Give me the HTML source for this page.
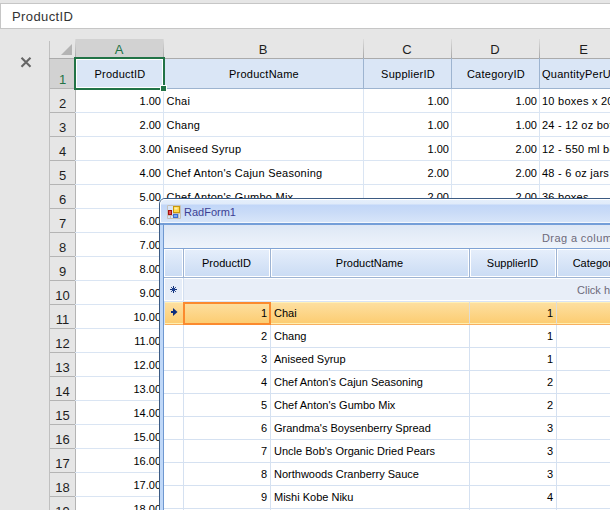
<!DOCTYPE html><html><head><meta charset="utf-8"><style>
*{margin:0;padding:0;box-sizing:border-box}
html,body{width:610px;height:510px;overflow:hidden;background:#e6e6e6;font-family:"Liberation Sans",sans-serif;position:relative}
.a{position:absolute}
.t{position:absolute;white-space:nowrap;font-size:11px;line-height:13px;color:#000}
</style></head><body>

<div class="a" style="left:0;top:3px;width:610px;height:26px;background:#fff;border:1px solid #c6c6c6;border-right:none"></div>
<div class="t" style="left:12px;top:9px;font-size:13px;line-height:16px;color:#333;letter-spacing:0.4px">ProductID</div>
<svg class="a" style="left:20px;top:56px" width="12" height="12" viewBox="0 0 12 12"><path d="M1.5 1.8L10.5 10.8M10.5 1.8L1.5 10.8" stroke="#666" stroke-width="2.1"/></svg>
<div class="a" style="left:49px;top:41px;width:1px;height:470px;background:#c0c0c0"></div>
<svg class="a" style="left:60px;top:44px" width="13" height="12"><path d="M12 0L12 11L1 11Z" fill="#b4b4b4"/></svg>
<div class="a" style="left:75px;top:39px;width:88px;height:19px;background:#d2d2d2"></div>
<div class="t" style="left:75px;width:88px;text-align:center;top:42px;font-size:13px;line-height:16px;color:#217346">A</div>
<div class="a" style="left:163px;top:39px;width:200px;height:19px;background:#e6e6e6"></div>
<div class="t" style="left:163px;width:200px;text-align:center;top:42px;font-size:13px;line-height:16px;color:#1e1e1e">B</div>
<div class="a" style="left:363px;top:39px;width:88px;height:19px;background:#e6e6e6"></div>
<div class="t" style="left:363px;width:88px;text-align:center;top:42px;font-size:13px;line-height:16px;color:#1e1e1e">C</div>
<div class="a" style="left:451px;top:39px;width:88px;height:19px;background:#e6e6e6"></div>
<div class="t" style="left:451px;width:88px;text-align:center;top:42px;font-size:13px;line-height:16px;color:#1e1e1e">D</div>
<div class="a" style="left:539px;top:39px;width:89px;height:19px;background:#e6e6e6"></div>
<div class="t" style="left:539px;width:89px;text-align:center;top:42px;font-size:13px;line-height:16px;color:#1e1e1e">E</div>
<div class="a" style="left:49px;top:58px;width:561px;height:1px;background:#ababab"></div>
<div class="a" style="left:163px;top:39px;width:1px;height:19px;background:linear-gradient(#dcdcdc,#a8a8a8)"></div>
<div class="a" style="left:363px;top:39px;width:1px;height:19px;background:linear-gradient(#dcdcdc,#a8a8a8)"></div>
<div class="a" style="left:451px;top:39px;width:1px;height:19px;background:linear-gradient(#dcdcdc,#a8a8a8)"></div>
<div class="a" style="left:539px;top:39px;width:1px;height:19px;background:linear-gradient(#dcdcdc,#a8a8a8)"></div>
<div class="a" style="left:628px;top:39px;width:1px;height:19px;background:linear-gradient(#dcdcdc,#a8a8a8)"></div>
<div class="a" style="left:75px;top:39px;width:1px;height:19px;background:linear-gradient(#dcdcdc,#a8a8a8)"></div>
<div class="a" style="left:50px;top:59px;width:25px;height:29px;background:#d2d2d2"></div>
<div class="t" style="left:50px;width:25px;text-align:center;top:72px;font-size:13px;line-height:16px;color:#217346">1</div>
<div class="a" style="left:50px;top:88px;width:25px;height:24px;background:#e6e6e6"></div>
<div class="t" style="left:50px;width:25px;text-align:center;top:96px;font-size:13px;line-height:16px;color:#1e1e1e">2</div>
<div class="a" style="left:50px;top:112px;width:25px;height:24px;background:#e6e6e6"></div>
<div class="t" style="left:50px;width:25px;text-align:center;top:120px;font-size:13px;line-height:16px;color:#1e1e1e">3</div>
<div class="a" style="left:50px;top:136px;width:25px;height:24px;background:#e6e6e6"></div>
<div class="t" style="left:50px;width:25px;text-align:center;top:144px;font-size:13px;line-height:16px;color:#1e1e1e">4</div>
<div class="a" style="left:50px;top:160px;width:25px;height:24px;background:#e6e6e6"></div>
<div class="t" style="left:50px;width:25px;text-align:center;top:168px;font-size:13px;line-height:16px;color:#1e1e1e">5</div>
<div class="a" style="left:50px;top:184px;width:25px;height:24px;background:#e6e6e6"></div>
<div class="t" style="left:50px;width:25px;text-align:center;top:192px;font-size:13px;line-height:16px;color:#1e1e1e">6</div>
<div class="a" style="left:50px;top:208px;width:25px;height:24px;background:#e6e6e6"></div>
<div class="t" style="left:50px;width:25px;text-align:center;top:216px;font-size:13px;line-height:16px;color:#1e1e1e">7</div>
<div class="a" style="left:50px;top:232px;width:25px;height:24px;background:#e6e6e6"></div>
<div class="t" style="left:50px;width:25px;text-align:center;top:240px;font-size:13px;line-height:16px;color:#1e1e1e">8</div>
<div class="a" style="left:50px;top:256px;width:25px;height:24px;background:#e6e6e6"></div>
<div class="t" style="left:50px;width:25px;text-align:center;top:264px;font-size:13px;line-height:16px;color:#1e1e1e">9</div>
<div class="a" style="left:50px;top:280px;width:25px;height:24px;background:#e6e6e6"></div>
<div class="t" style="left:50px;width:25px;text-align:center;top:288px;font-size:13px;line-height:16px;color:#1e1e1e">10</div>
<div class="a" style="left:50px;top:304px;width:25px;height:24px;background:#e6e6e6"></div>
<div class="t" style="left:50px;width:25px;text-align:center;top:312px;font-size:13px;line-height:16px;color:#1e1e1e">11</div>
<div class="a" style="left:50px;top:328px;width:25px;height:24px;background:#e6e6e6"></div>
<div class="t" style="left:50px;width:25px;text-align:center;top:336px;font-size:13px;line-height:16px;color:#1e1e1e">12</div>
<div class="a" style="left:50px;top:352px;width:25px;height:24px;background:#e6e6e6"></div>
<div class="t" style="left:50px;width:25px;text-align:center;top:360px;font-size:13px;line-height:16px;color:#1e1e1e">13</div>
<div class="a" style="left:50px;top:376px;width:25px;height:24px;background:#e6e6e6"></div>
<div class="t" style="left:50px;width:25px;text-align:center;top:384px;font-size:13px;line-height:16px;color:#1e1e1e">14</div>
<div class="a" style="left:50px;top:400px;width:25px;height:24px;background:#e6e6e6"></div>
<div class="t" style="left:50px;width:25px;text-align:center;top:408px;font-size:13px;line-height:16px;color:#1e1e1e">15</div>
<div class="a" style="left:50px;top:424px;width:25px;height:24px;background:#e6e6e6"></div>
<div class="t" style="left:50px;width:25px;text-align:center;top:432px;font-size:13px;line-height:16px;color:#1e1e1e">16</div>
<div class="a" style="left:50px;top:448px;width:25px;height:24px;background:#e6e6e6"></div>
<div class="t" style="left:50px;width:25px;text-align:center;top:456px;font-size:13px;line-height:16px;color:#1e1e1e">17</div>
<div class="a" style="left:50px;top:472px;width:25px;height:24px;background:#e6e6e6"></div>
<div class="t" style="left:50px;width:25px;text-align:center;top:480px;font-size:13px;line-height:16px;color:#1e1e1e">18</div>
<div class="a" style="left:50px;top:496px;width:25px;height:24px;background:#e6e6e6"></div>
<div class="t" style="left:50px;width:25px;text-align:center;top:504px;font-size:13px;line-height:16px;color:#1e1e1e">19</div>
<div class="a" style="left:50px;top:520px;width:25px;height:24px;background:#e6e6e6"></div>
<div class="t" style="left:50px;width:25px;text-align:center;top:528px;font-size:13px;line-height:16px;color:#1e1e1e">20</div>
<div class="a" style="left:50px;top:88px;width:25px;height:1px;background:#b4b4b4"></div>
<div class="a" style="left:50px;top:112px;width:25px;height:1px;background:#b4b4b4"></div>
<div class="a" style="left:50px;top:136px;width:25px;height:1px;background:#b4b4b4"></div>
<div class="a" style="left:50px;top:160px;width:25px;height:1px;background:#b4b4b4"></div>
<div class="a" style="left:50px;top:184px;width:25px;height:1px;background:#b4b4b4"></div>
<div class="a" style="left:50px;top:208px;width:25px;height:1px;background:#b4b4b4"></div>
<div class="a" style="left:50px;top:232px;width:25px;height:1px;background:#b4b4b4"></div>
<div class="a" style="left:50px;top:256px;width:25px;height:1px;background:#b4b4b4"></div>
<div class="a" style="left:50px;top:280px;width:25px;height:1px;background:#b4b4b4"></div>
<div class="a" style="left:50px;top:304px;width:25px;height:1px;background:#b4b4b4"></div>
<div class="a" style="left:50px;top:328px;width:25px;height:1px;background:#b4b4b4"></div>
<div class="a" style="left:50px;top:352px;width:25px;height:1px;background:#b4b4b4"></div>
<div class="a" style="left:50px;top:376px;width:25px;height:1px;background:#b4b4b4"></div>
<div class="a" style="left:50px;top:400px;width:25px;height:1px;background:#b4b4b4"></div>
<div class="a" style="left:50px;top:424px;width:25px;height:1px;background:#b4b4b4"></div>
<div class="a" style="left:50px;top:448px;width:25px;height:1px;background:#b4b4b4"></div>
<div class="a" style="left:50px;top:472px;width:25px;height:1px;background:#b4b4b4"></div>
<div class="a" style="left:50px;top:496px;width:25px;height:1px;background:#b4b4b4"></div>
<div class="a" style="left:50px;top:520px;width:25px;height:1px;background:#b4b4b4"></div>
<div class="a" style="left:50px;top:544px;width:25px;height:1px;background:#b4b4b4"></div>
<div class="a" style="left:75px;top:58px;width:1px;height:460px;background:#b4b4b4"></div>
<div class="a" style="left:76px;top:59px;width:535px;height:460px;background:#fff"></div>
<div class="a" style="left:76px;top:59px;width:535px;height:29px;background:#dae6f6"></div>
<div class="a" style="left:163px;top:58px;width:1px;height:30px;background:#9db4d0"></div>
<div class="a" style="left:163px;top:88px;width:1px;height:430px;background:#dae5f3"></div>
<div class="a" style="left:363px;top:58px;width:1px;height:30px;background:#9db4d0"></div>
<div class="a" style="left:363px;top:88px;width:1px;height:430px;background:#dae5f3"></div>
<div class="a" style="left:451px;top:58px;width:1px;height:30px;background:#9db4d0"></div>
<div class="a" style="left:451px;top:88px;width:1px;height:430px;background:#dae5f3"></div>
<div class="a" style="left:539px;top:58px;width:1px;height:30px;background:#9db4d0"></div>
<div class="a" style="left:539px;top:88px;width:1px;height:430px;background:#dae5f3"></div>
<div class="a" style="left:628px;top:58px;width:1px;height:30px;background:#9db4d0"></div>
<div class="a" style="left:628px;top:88px;width:1px;height:430px;background:#dae5f3"></div>
<div class="a" style="left:75px;top:88px;width:535px;height:1px;background:#9db4d0"></div>
<div class="a" style="left:75px;top:112px;width:535px;height:1px;background:#dae5f3"></div>
<div class="a" style="left:75px;top:136px;width:535px;height:1px;background:#dae5f3"></div>
<div class="a" style="left:75px;top:160px;width:535px;height:1px;background:#dae5f3"></div>
<div class="a" style="left:75px;top:184px;width:535px;height:1px;background:#dae5f3"></div>
<div class="a" style="left:75px;top:208px;width:535px;height:1px;background:#dae5f3"></div>
<div class="a" style="left:75px;top:232px;width:535px;height:1px;background:#dae5f3"></div>
<div class="a" style="left:75px;top:256px;width:535px;height:1px;background:#dae5f3"></div>
<div class="a" style="left:75px;top:280px;width:535px;height:1px;background:#dae5f3"></div>
<div class="a" style="left:75px;top:304px;width:535px;height:1px;background:#dae5f3"></div>
<div class="a" style="left:75px;top:328px;width:535px;height:1px;background:#dae5f3"></div>
<div class="a" style="left:75px;top:352px;width:535px;height:1px;background:#dae5f3"></div>
<div class="a" style="left:75px;top:376px;width:535px;height:1px;background:#dae5f3"></div>
<div class="a" style="left:75px;top:400px;width:535px;height:1px;background:#dae5f3"></div>
<div class="a" style="left:75px;top:424px;width:535px;height:1px;background:#dae5f3"></div>
<div class="a" style="left:75px;top:448px;width:535px;height:1px;background:#dae5f3"></div>
<div class="a" style="left:75px;top:472px;width:535px;height:1px;background:#dae5f3"></div>
<div class="a" style="left:75px;top:496px;width:535px;height:1px;background:#dae5f3"></div>
<div class="a" style="left:75px;top:520px;width:535px;height:1px;background:#dae5f3"></div>
<div class="t" style="left:76px;width:88px;text-align:center;top:68px;letter-spacing:0.25px">ProductID</div>
<div class="t" style="left:164px;width:200px;text-align:center;top:68px;letter-spacing:0.25px">ProductName</div>
<div class="t" style="left:364px;width:88px;text-align:center;top:68px;letter-spacing:0.25px">SupplierID</div>
<div class="t" style="left:452px;width:88px;text-align:center;top:68px;letter-spacing:0.25px">CategoryID</div>
<div class="t" style="left:542px;top:68px;letter-spacing:0.25px">QuantityPerUnit</div>
<div class="t" style="left:75px;width:86px;text-align:right;top:95px">1.00</div>
<div class="t" style="left:166.5px;top:95px;letter-spacing:0.25px">Chai</div>
<div class="t" style="left:363px;width:86px;text-align:right;top:95px">1.00</div>
<div class="t" style="left:451px;width:86px;text-align:right;top:95px">1.00</div>
<div class="t" style="left:542px;top:95px;letter-spacing:0.25px">10 boxes x 20 bags</div>
<div class="t" style="left:75px;width:86px;text-align:right;top:119px">2.00</div>
<div class="t" style="left:166.5px;top:119px;letter-spacing:0.25px">Chang</div>
<div class="t" style="left:363px;width:86px;text-align:right;top:119px">1.00</div>
<div class="t" style="left:451px;width:86px;text-align:right;top:119px">1.00</div>
<div class="t" style="left:542px;top:119px;letter-spacing:0.25px">24 - 12 oz bottles</div>
<div class="t" style="left:75px;width:86px;text-align:right;top:143px">3.00</div>
<div class="t" style="left:166.5px;top:143px;letter-spacing:0.25px">Aniseed Syrup</div>
<div class="t" style="left:363px;width:86px;text-align:right;top:143px">1.00</div>
<div class="t" style="left:451px;width:86px;text-align:right;top:143px">2.00</div>
<div class="t" style="left:542px;top:143px;letter-spacing:0.25px">12 - 550 ml bottles</div>
<div class="t" style="left:75px;width:86px;text-align:right;top:167px">4.00</div>
<div class="t" style="left:166.5px;top:167px;letter-spacing:0.25px">Chef Anton's Cajun Seasoning</div>
<div class="t" style="left:363px;width:86px;text-align:right;top:167px">2.00</div>
<div class="t" style="left:451px;width:86px;text-align:right;top:167px">2.00</div>
<div class="t" style="left:542px;top:167px;letter-spacing:0.25px">48 - 6 oz jars</div>
<div class="t" style="left:75px;width:86px;text-align:right;top:191px">5.00</div>
<div class="t" style="left:166.5px;top:191px;letter-spacing:0.25px">Chef Anton's Gumbo Mix</div>
<div class="t" style="left:363px;width:86px;text-align:right;top:191px">2.00</div>
<div class="t" style="left:451px;width:86px;text-align:right;top:191px">2.00</div>
<div class="t" style="left:542px;top:191px;letter-spacing:0.25px">36 boxes</div>
<div class="t" style="left:75px;width:86px;text-align:right;top:215px">6.00</div>
<div class="t" style="left:75px;width:86px;text-align:right;top:239px">7.00</div>
<div class="t" style="left:75px;width:86px;text-align:right;top:263px">8.00</div>
<div class="t" style="left:75px;width:86px;text-align:right;top:287px">9.00</div>
<div class="t" style="left:75px;width:86px;text-align:right;top:311px">10.00</div>
<div class="t" style="left:75px;width:86px;text-align:right;top:335px">11.00</div>
<div class="t" style="left:75px;width:86px;text-align:right;top:359px">12.00</div>
<div class="t" style="left:75px;width:86px;text-align:right;top:383px">13.00</div>
<div class="t" style="left:75px;width:86px;text-align:right;top:407px">14.00</div>
<div class="t" style="left:75px;width:86px;text-align:right;top:431px">15.00</div>
<div class="t" style="left:75px;width:86px;text-align:right;top:455px">16.00</div>
<div class="t" style="left:75px;width:86px;text-align:right;top:479px">17.00</div>
<div class="t" style="left:75px;width:86px;text-align:right;top:503px">18.00</div>
<div class="a" style="left:74px;top:57px;width:91px;height:33px;border:2px solid #217346"></div>
<div class="a" style="left:76px;top:59px;width:87px;height:29px;border:1px solid #fff"></div>
<div class="a" style="left:160px;top:85px;width:7px;height:7px;background:#217346;border:1px solid #fff"></div>
<div class="a" style="left:159px;top:198px;width:520px;height:400px;background:#fff;border:1px solid #3b5a82;border-radius:6px 6px 0 0;overflow:hidden"><div class="a" style="left:0;top:0;width:520px;height:400px;border-left:1px solid #fff;border-top:1px solid #fff;border-radius:5px 5px 0 0"></div></div>
<div class="a" style="left:161px;top:200px;width:460px;height:22px;border-radius:4px 0 0 0;background:linear-gradient(#e4eefb 0px,#e0ebfa 4px,#c1d6f8 5px,#c9dbf7 12px,#d7e5f9 22px)"></div>
<div class="a" style="left:160px;top:222px;width:460px;height:1px;background:#f4f8fd"></div>
<div class="a" style="left:160px;top:223px;width:460px;height:2px;background:#749ed8"></div>
<div class="a" style="left:160px;top:225px;width:3px;height:300px;background:#c0d8f8"></div>
<div class="a" style="left:163px;top:223px;width:1px;height:300px;background:#6f98d0"></div>
<svg class="a" style="left:167px;top:205px" width="14" height="14" viewBox="0 0 14 14"><rect x="0" y="0" width="14" height="14" fill="#d6e4f8"/><path d="M0.5 0.5H13.5V13.5H0.5Z M3.5 9V13.5 M0.5 10.5H6 M11.5 8V13.5 M6 8.5H13.5" fill="none" stroke="#c4c0b8" stroke-width="1"/><rect x="6" y="1" width="7" height="7" fill="#c8980c"/><rect x="7" y="2" width="5" height="5" fill="#ffd84a"/><rect x="7.5" y="2.5" width="3" height="2" fill="#fff0a8"/><rect x="1" y="5" width="4" height="5" fill="#a81010"/><rect x="2" y="6" width="2" height="3" fill="#e05050"/><rect x="6" y="9" width="5" height="4" fill="#3a6cd0"/><rect x="7" y="10" width="3" height="2" fill="#78a8f0"/></svg>
<div class="t" style="left:184px;top:205px;font-size:11px;line-height:14px;color:#3c3f94">RadForm1</div>
<div class="a" style="left:164px;top:225px;width:460px;height:23px;background:linear-gradient(#dde7f5,#eff4fb)"></div>
<div class="t" style="left:542px;top:232px;color:#6d6a7a;letter-spacing:0.4px">Drag a column here to group by this column.</div>
<div class="a" style="left:164px;top:248px;width:460px;height:30px;background:#9db3d3"></div>
<div class="a" style="left:164px;top:248px;width:460px;height:1px;background:#80a3d4"></div>
<div class="a" style="left:164px;top:249px;width:19px;height:28px;background:linear-gradient(#e5eefb,#cbdcf4);border:1px solid #fff"></div>
<div class="a" style="left:184px;top:249px;width:86px;height:28px;background:linear-gradient(#e5eefb,#cbdcf4);border:1px solid #fff"></div>
<div class="a" style="left:271px;top:249px;width:198px;height:28px;background:linear-gradient(#e5eefb,#cbdcf4);border:1px solid #fff"></div>
<div class="a" style="left:470px;top:249px;width:86px;height:28px;background:linear-gradient(#e5eefb,#cbdcf4);border:1px solid #fff"></div>
<div class="a" style="left:557px;top:249px;width:88px;height:28px;background:linear-gradient(#e5eefb,#cbdcf4);border:1px solid #fff"></div>
<div class="a" style="left:646px;top:249px;width:54px;height:28px;background:linear-gradient(#e5eefb,#cbdcf4);border:1px solid #fff"></div>
<div class="t" style="left:183px;width:87px;text-align:center;top:257px;color:#000">ProductID</div>
<div class="t" style="left:270px;width:199px;text-align:center;top:257px;color:#000">ProductName</div>
<div class="t" style="left:469px;width:87px;text-align:center;top:257px;color:#000">SupplierID</div>
<div class="t" style="left:556px;width:89px;text-align:center;top:257px;color:#000">CategoryID</div>
<div class="a" style="left:164px;top:278px;width:460px;height:24px;background:#f3f6fb"></div>
<div class="a" style="left:164px;top:278px;width:19px;height:23px;background:#e6edf8;border:1px solid #fff"></div>
<div class="a" style="left:183px;top:278px;width:1px;height:24px;background:#d3dff0"></div>
<div class="a" style="left:184px;top:278px;width:440px;height:23px;background:#e8eef8;border-top:1px solid #fff;border-bottom:1px solid #fff"></div>
<svg class="a" style="left:170px;top:286px" width="8" height="8" viewBox="0 0 8 8"><path d="M3.5 0V7M0 3.5H7M1.2 1.2L5.8 5.8M5.8 1.2L1.2 5.8" stroke="#14327a" stroke-width="1"/><circle cx="3.5" cy="3.5" r="1.6" fill="#1e4494"/></svg>
<div class="t" style="left:577px;top:284px;color:#6d6a7a">Click here to add a new row</div>
<div class="a" style="left:164px;top:302px;width:460px;height:23px;background:linear-gradient(#fde0a2,#fccb6e)"></div>
<div class="a" style="left:164px;top:302px;width:460px;height:1px;background:#fff0b8"></div>
<div class="a" style="left:164px;top:301px;width:460px;height:1px;background:#d8e3f4"></div>
<div class="a" style="left:164px;top:323px;width:460px;height:1px;background:#ffeeb0"></div>
<div class="a" style="left:164px;top:324px;width:460px;height:1px;background:#f8b060"></div>
<div class="a" style="left:164px;top:302px;width:1px;height:23px;background:#d0e0f8"></div>
<div class="a" style="left:469px;top:302px;width:1px;height:22px;background:#dcdcd8"></div>
<div class="a" style="left:556px;top:302px;width:1px;height:22px;background:#dcdcd8"></div>
<div class="a" style="left:183px;top:302px;width:88px;height:23px;border:2px solid #fb8a2e"></div>
<div class="t" style="left:184px;width:83px;text-align:right;top:307px">1</div>
<div class="t" style="left:274px;top:307px">Chai</div>
<div class="t" style="left:470px;width:83px;text-align:right;top:307px">1</div>
<div class="a" style="left:164px;top:347px;width:460px;height:1px;background:#d5e1f1"></div>
<div class="t" style="left:184px;width:83px;text-align:right;top:330px">2</div>
<div class="t" style="left:274px;top:330px">Chang</div>
<div class="t" style="left:470px;width:83px;text-align:right;top:330px">1</div>
<div class="a" style="left:164px;top:370px;width:460px;height:1px;background:#d5e1f1"></div>
<div class="t" style="left:184px;width:83px;text-align:right;top:353px">3</div>
<div class="t" style="left:274px;top:353px">Aniseed Syrup</div>
<div class="t" style="left:470px;width:83px;text-align:right;top:353px">1</div>
<div class="a" style="left:164px;top:393px;width:460px;height:1px;background:#d5e1f1"></div>
<div class="t" style="left:184px;width:83px;text-align:right;top:376px">4</div>
<div class="t" style="left:274px;top:376px">Chef Anton's Cajun Seasoning</div>
<div class="t" style="left:470px;width:83px;text-align:right;top:376px">2</div>
<div class="a" style="left:164px;top:416px;width:460px;height:1px;background:#d5e1f1"></div>
<div class="t" style="left:184px;width:83px;text-align:right;top:399px">5</div>
<div class="t" style="left:274px;top:399px">Chef Anton's Gumbo Mix</div>
<div class="t" style="left:470px;width:83px;text-align:right;top:399px">2</div>
<div class="a" style="left:164px;top:439px;width:460px;height:1px;background:#d5e1f1"></div>
<div class="t" style="left:184px;width:83px;text-align:right;top:422px">6</div>
<div class="t" style="left:274px;top:422px">Grandma's Boysenberry Spread</div>
<div class="t" style="left:470px;width:83px;text-align:right;top:422px">3</div>
<div class="a" style="left:164px;top:462px;width:460px;height:1px;background:#d5e1f1"></div>
<div class="t" style="left:184px;width:83px;text-align:right;top:445px">7</div>
<div class="t" style="left:274px;top:445px">Uncle Bob's Organic Dried Pears</div>
<div class="t" style="left:470px;width:83px;text-align:right;top:445px">3</div>
<div class="a" style="left:164px;top:485px;width:460px;height:1px;background:#d5e1f1"></div>
<div class="t" style="left:184px;width:83px;text-align:right;top:468px">8</div>
<div class="t" style="left:274px;top:468px">Northwoods Cranberry Sauce</div>
<div class="t" style="left:470px;width:83px;text-align:right;top:468px">3</div>
<div class="a" style="left:164px;top:508px;width:460px;height:1px;background:#d5e1f1"></div>
<div class="t" style="left:184px;width:83px;text-align:right;top:491px">9</div>
<div class="t" style="left:274px;top:491px">Mishi Kobe Niku</div>
<div class="t" style="left:470px;width:83px;text-align:right;top:491px">4</div>
<div class="a" style="left:164px;top:531px;width:460px;height:1px;background:#d5e1f1"></div>
<div class="t" style="left:184px;width:83px;text-align:right;top:514px">10</div>
<div class="t" style="left:274px;top:514px">Ikura</div>
<div class="t" style="left:470px;width:83px;text-align:right;top:514px">4</div>
<div class="a" style="left:183px;top:325px;width:1px;height:200px;background:#d5e1f1"></div>
<div class="a" style="left:270px;top:325px;width:1px;height:200px;background:#d5e1f1"></div>
<div class="a" style="left:469px;top:325px;width:1px;height:200px;background:#d5e1f1"></div>
<div class="a" style="left:556px;top:325px;width:1px;height:200px;background:#d5e1f1"></div>
<svg class="a" style="left:170px;top:307px" width="9" height="10" viewBox="0 0 9 10"><path d="M1 4H3V1L7.5 5L3 9V6H1Z" fill="#0c2c7c"/></svg>
</body></html>
